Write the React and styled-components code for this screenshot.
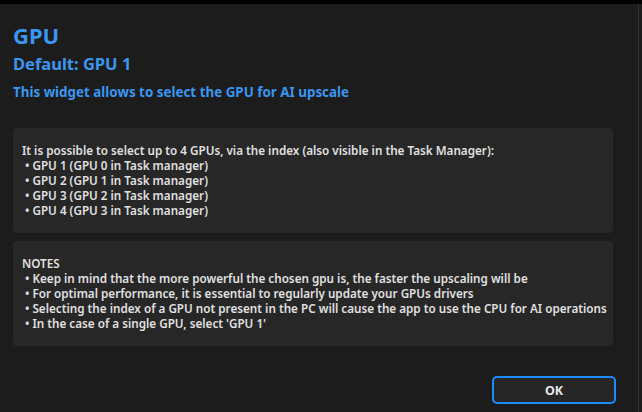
import React from "react";
import styled, { createGlobalStyle } from "styled-components";

const GlobalStyle = createGlobalStyle`
  html, body {
    margin: 0;
    padding: 0;
    background: #1c1c1c;
  }
  body {
    font-family: "Noto Sans", "Open Sans", sans-serif;
  }
`;

const Screen = styled.div`
  width: 642px;
  height: 412px;
  display: flex;
  flex-direction: column;
  background: #000;
  overflow: hidden;
`;

const Body = styled.div`
  flex: 1;
  display: flex;
  margin-top: 4px;
  min-height: 0;
`;

const Dialog = styled.div`
  flex: 1;
  min-width: 0;
  background: #1c1c1c;
  display: flex;
  flex-direction: column;
  padding: 16px 25px 0 13px;
`;

const SideStrip = styled.div`
  width: 3px;
  background: #1c1c1c;
  border-left: 1px solid #333;
`;

const Title = styled.h1`
  margin: 0;
  font-size: 22px;
  font-weight: 700;
  color: #3a96f0;
  line-height: 30px;
`;

const Subtitle = styled.h2`
  margin: 2px 0 0;
  font-size: 16.5px;
  font-weight: 700;
  color: #3a96f0;
  line-height: 24px;
`;

const Lead = styled.p`
  margin: 7px 0 0;
  font-size: 13.4px;
  font-weight: 700;
  color: #3a96f0;
  line-height: 18px;
`;

const Card = styled.div`
  background: #272727;
  border-radius: 4px;
  padding: 15px 9px 14px;
  margin-top: ${(p) => p.$gap}px;
  height: 105px;
  box-sizing: border-box;
  color: #e0e0e0;
  font-size: 11.7px;
  font-weight: 600;
  line-height: 15px;
`;

const Line = styled.div`
  white-space: nowrap;
  padding-left: ${(p) => (p.$bullet ? "3px" : "0")};
`;

const Footer = styled.div`
  display: flex;
  justify-content: flex-end;
  margin-top: 30px;
`;

const OkButton = styled.button`
  width: 124px;
  height: 28px;
  margin-right: -3px;
  background: #262626;
  border: 2px solid #1a8cff;
  border-radius: 5px;
  color: #e6e6e6;
  font-family: inherit;
  font-size: 12.5px;
  font-weight: 700;
  cursor: pointer;
`;

const gpus = [
  "GPU 1 (GPU 0 in Task manager)",
  "GPU 2 (GPU 1 in Task manager)",
  "GPU 3 (GPU 2 in Task manager)",
  "GPU 4 (GPU 3 in Task manager)",
];

const notes = [
  "Keep in mind that the more powerful the chosen gpu is, the faster the upscaling will be",
  "For optimal performance, it is essential to regularly update your GPUs drivers",
  "Selecting the index of a GPU not present in the PC will cause the app to use the CPU for AI operations",
  "In the case of a single GPU, select 'GPU 1'",
];

export default function App() {
  return (
    <>
      <GlobalStyle />
      <Screen>
        <Body>
          <Dialog>
            <Title>GPU</Title>
            <Subtitle>Default: GPU 1</Subtitle>
            <Lead>This widget allows to select the GPU for AI upscale</Lead>
            <Card $gap={27}>
              <Line>
                It is possible to select up to 4 GPUs, via the index (also visible in the Task Manager):
              </Line>
              {gpus.map((g) => (
                <Line key={g} $bullet>• {g}</Line>
              ))}
            </Card>
            <Card $gap={8}>
              <Line>NOTES</Line>
              {notes.map((n) => (
                <Line key={n} $bullet>• {n}</Line>
              ))}
            </Card>
            <Footer>
              <OkButton>OK</OkButton>
            </Footer>
          </Dialog>
          <SideStrip />
        </Body>
      </Screen>
    </>
  );
}
